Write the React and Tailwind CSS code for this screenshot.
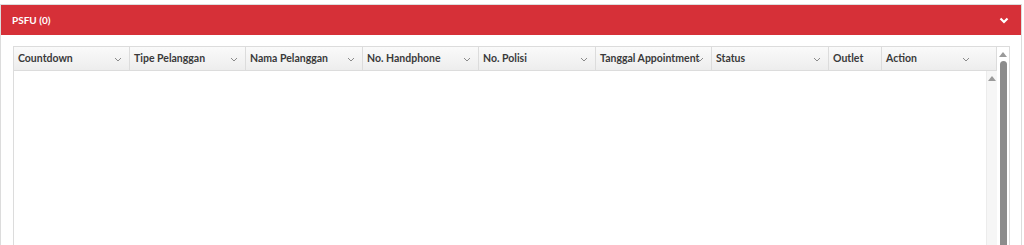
const columns = [
  { label: "Countdown", w: "w-[116px]", arrow: "right-[7px]" },
  { label: "Tipe Pelanggan", w: "w-[116px]", arrow: "right-[7px]" },
  { label: "Nama Pelanggan", w: "w-[117px]", arrow: "right-[7px]" },
  { label: "No. Handphone", w: "w-[116px]", arrow: "right-[7px]" },
  { label: "No. Polisi", w: "w-[117px]", arrow: "right-[7px]" },
  { label: "Tanggal Appointment", w: "w-[116px]", arrow: "right-[7px]" },
  { label: "Status", w: "w-[117px]", arrow: "right-[7px]" },
  { label: "Outlet", w: "w-[53px]", arrow: null },
  { label: "Action", w: "flex-1", arrow: "right-[26px]" },
];

const Chevron = ({ className = "" }) => (
  <svg width="8" height="5" viewBox="0 0 8 5" className={className}>
    <path d="M1 1l3 3 3-3" fill="none" stroke="#8a8a8a" strokeWidth="1" />
  </svg>
);

const UpArrow = ({ className = "" }) => (
  <svg width="8" height="5" viewBox="0 0 8 5" className={className}>
    <path d="M0 5L4 0l4 5z" fill="#9a9a9a" />
  </svg>
);

const App = () => {
  return (
    <div
      className="w-[1024px] h-[245px] overflow-hidden bg-white pt-1"
      style={{ fontFamily: "Lato, 'Open Sans', sans-serif" }}
    >
      <div className="w-[1022px] border border-[#dcdcdc]">
        {/* panel header */}
        <div className="h-[30px] bg-[#d63038] flex items-center justify-between pl-[11px] pr-[12px]">
          <span className="text-white text-[10px] font-bold">PSFU (0)</span>
          <svg width="10" height="7" viewBox="0 0 10 7">
            <path d="M1.5 1.5L5 5l3.5-3.5" fill="none" stroke="#fff" strokeWidth="2.2" />
          </svg>
        </div>

        {/* panel body */}
        <div className="pt-[11px] pl-[12px] pr-[11px]">
          <div className="flex border border-[#dcdcdc] h-[300px]">
            <div className="flex-1 flex flex-col">
              {/* grid header */}
              <div className="flex h-[24px] border-b border-[#dcdcdc] bg-gradient-to-b from-[#fafafa] to-[#ededed]">
                {columns.map((c) => (
                  <div
                    key={c.label}
                    className={`${c.w} relative flex items-center pl-[4px] border-r border-[#dcdcdc]`}
                  >
                    <span className="text-[10.5px] font-bold text-[#3a3a3a] whitespace-nowrap">
                      {c.label}
                    </span>
                    {c.arrow && <Chevron className={`absolute top-[10px] ${c.arrow}`} />}
                  </div>
                ))}
              </div>
              {/* grid body */}
              <div className="flex-1 flex">
                <div className="flex-1 bg-white" />
                <div className="w-[11px] bg-[#f6f6f6] border-l border-[#ececec] flex justify-center pt-[5px]">
                  <UpArrow />
                </div>
              </div>
            </div>
            {/* outer scrollbar */}
            <div className="w-[12px] flex flex-col items-center pt-[5px] bg-white">
              <UpArrow />
              <div className="mt-[4px] w-[7px] flex-1 rounded-t-full bg-[#8c8c8c]" />
            </div>
          </div>
        </div>
      </div>
    </div>
  );
};

export default App;
